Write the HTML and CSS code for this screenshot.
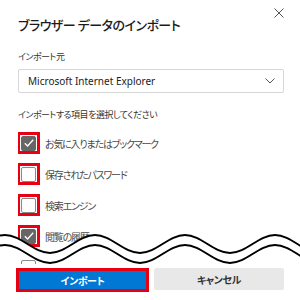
FILE: index.html
```html
<!DOCTYPE html>
<html lang="ja">
<head>
<meta charset="utf-8">
<link rel="stylesheet" href="styles.css">
</head>
<body>
<div class="dialog">
  <div class="header">
    <h1 class="title">ブラウザー データのインポート</h1>
    <span class="close"><svg width="10" height="10" viewBox="0 0 10 10"><path d="M0.5 0.5 L9.5 9.5 M9.5 0.5 L0.5 9.5" stroke="#555" stroke-width="1" fill="none"/></svg></span>
  </div>
  <div class="field-label">インポート元</div>
  <div class="select">
    <span class="select-text">Microsoft Internet Explorer</span>
    <svg class="chev" width="10" height="6" viewBox="0 0 10 6"><path d="M0.5 0.5 L5 5 L9.5 0.5" stroke="#555" stroke-width="1" fill="none"/></svg>
  </div>
  <div class="field-label items-label">インポートする項目を選択してください</div>
  <div class="list">
    <div class="row"><span class="mark red"><span class="cb checked"><svg width="10" height="8" viewBox="0 0 10 8"><path d="M0.8 4.2 L3.6 7 L9.2 0.8" stroke="#fff" stroke-width="1.3" fill="none"/></svg></span></span><span class="lbl">お気に入りまたはブックマーク</span></div>
    <div class="row"><span class="mark red"><span class="cb"></span></span><span class="lbl">保存されたパスワード</span></div>
    <div class="row"><span class="mark red"><span class="cb"></span></span><span class="lbl">検索エンジン</span></div>
    <div class="row"><span class="mark red"><span class="cb checked"><svg width="10" height="8" viewBox="0 0 10 8"><path d="M0.8 4.2 L3.6 7 L9.2 0.8" stroke="#fff" stroke-width="1.3" fill="none"/></svg></span></span><span class="lbl">閲覧の履歴</span></div>
    <div class="row"><span class="mark"><span class="cb"></span></span><span class="lbl">ア</span></div>
  </div>
  <div class="footer">
    <button class="btn primary">インポート</button>
    <button class="btn secondary">キャンセル</button>
  </div>
  <svg class="tear" width="300" height="50" viewBox="0 0 300 50">
    <path d="M-40 33 C-23.6 33 -11.4 15 5 15 S33.6 33 50 33 S78.6 15 95 15 S123.6 33 140 33 S168.6 15 185 15 S213.6 33 230 33 S258.6 15 275 15 S303.6 33 320 33 L320 43 C303.6 43 291.4 25 275 25 C258.6 25 246.4 43 230 43 C213.6 43 201.4 25 185 25 C168.6 25 156.4 43 140 43 C123.6 43 111.4 25 95 25 C78.6 25 66.4 43 50 43 C33.6 43 21.4 25 5 25 C-11.4 25 -23.6 43 -40 43 Z" fill="#fff"/>
    <path d="M-40 33 C-23.6 33 -11.4 15 5 15 S33.6 33 50 33 S78.6 15 95 15 S123.6 33 140 33 S168.6 15 185 15 S213.6 33 230 33 S258.6 15 275 15 S303.6 33 320 33" fill="none" stroke="#000" stroke-width="2"/>
    <path d="M-40 43 C-23.6 43 -11.4 25 5 25 S33.6 43 50 43 S78.6 25 95 25 S123.6 43 140 43 S168.6 25 185 25 S213.6 43 230 43 S258.6 25 275 25 S303.6 43 320 43" fill="none" stroke="#000" stroke-width="2"/>
  </svg>
</div>
</body>
</html>
```

FILE: styles.css
```css
html, body {
  margin: 0;
  padding: 0;
  width: 300px;
  height: 300px;
  overflow: hidden;
  background: #fff;
}
.dialog {
  position: relative;
  width: 300px;
  height: 300px;
  box-sizing: border-box;
  padding: 0 16px 0 18px;
  font-family: "Noto Sans CJK JP", "Noto Sans", sans-serif;
  font-feature-settings: "palt";
  color: #1b1b1b;
}
.header {
  display: flex;
  justify-content: space-between;
  align-items: flex-start;
}
.title {
  margin: 15px 0 0 0;
  font-size: 13px;
  letter-spacing: -0.5px;
  line-height: 20px;
  font-weight: 500;
  color: #1b1b1b;
}
.close {
  margin: 8px 0 0 0;
  display: flex;
}
.field-label {
  margin-top: 15px;
  font-size: 9px;
  letter-spacing: -0.5px;
  line-height: 14px;
  color: #333;
}
.select {
  margin-top: 5px;
  height: 24px;
  box-sizing: border-box;
  border: 1px solid #d6d6d6;
  border-radius: 2px;
  display: flex;
  align-items: center;
  justify-content: space-between;
  padding: 0 8px 0 9px;
}
.select-text {
  font-family: "Noto Sans", sans-serif;
  font-size: 10px;
  color: #222;
}
.items-label {
  margin-top: 15px;
}
.list {
  margin-top: 10px;
  height: 132px;
  overflow: hidden;
  display: flex;
  flex-direction: column;
  gap: 9px;
}
.row {
  display: flex;
  align-items: center;
  height: 22px;
  flex-shrink: 0;
}
.mark {
  width: 23px;
  height: 22px;
  box-sizing: border-box;
  border: 3px solid transparent;
  display: flex;
  align-items: center;
  justify-content: center;
  margin-left: -1px;
}
.mark.red {
  border-color: #e60012;
}
.cb {
  width: 15px;
  height: 15px;
  box-sizing: border-box;
  border: 1px solid #8a8a8a;
  border-radius: 2px;
  background: #fff;
  display: flex;
  align-items: center;
  justify-content: center;
}
.cb.checked {
  background: #666;
  border-color: #666;
}
.lbl {
  margin-left: 5px;
  font-size: 10px;
  letter-spacing: -1.2px;
  color: #4a4a4a;
}
.footer {
  margin-top: 4px;
  display: flex;
  gap: 5px;
  align-items: flex-start;
  margin-left: -2px;
}
.btn {
  font-family: "Noto Sans CJK JP", sans-serif;
  font-feature-settings: "palt";
  font-size: 10px;
  letter-spacing: -0.4px;
  font-weight: 700;
  border-radius: 2px;
  cursor: pointer;
  padding: 0;
}
.primary {
  width: 133px;
  height: 24px;
  background: #0078d4;
  color: #fff;
  border: 3px solid #e60012;
  border-radius: 0;
}
.secondary {
  width: 130px;
  height: 22px;
  background: #e8e8e8;
  color: #333;
  border: none;
}
.tear {
  position: absolute;
  left: 0;
  top: 220px;
}
```
